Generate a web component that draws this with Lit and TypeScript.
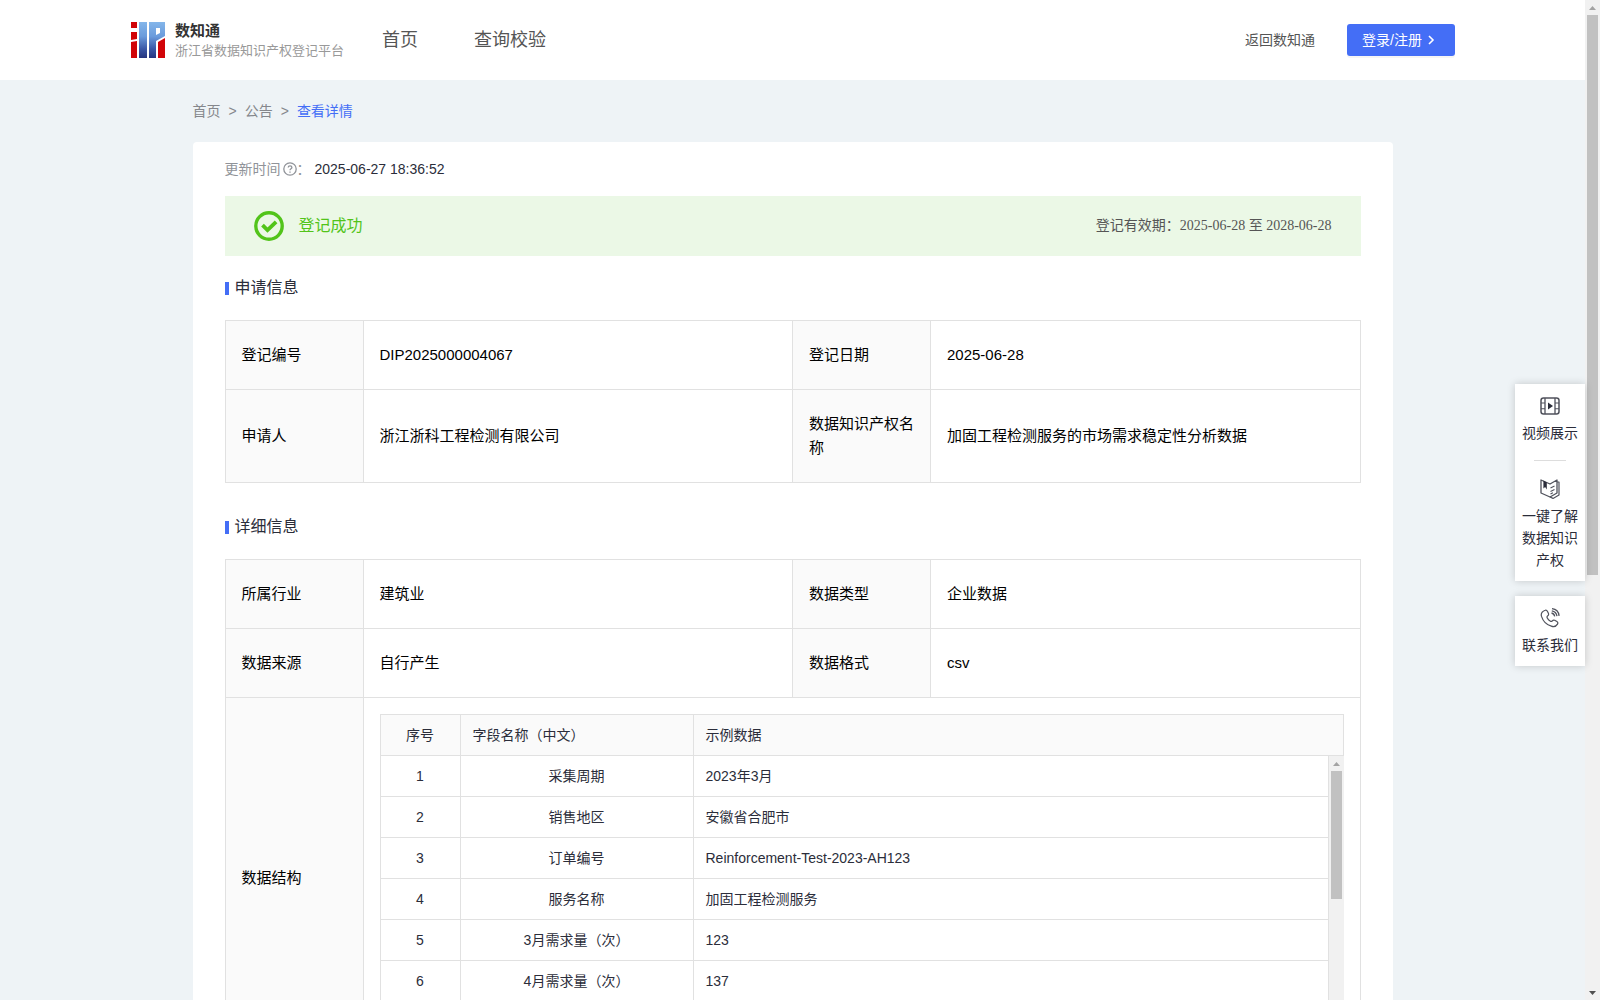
import { LitElement, html, css, svg } from "lit";
import { customElement, property } from "lit/decorators.js";

const fields = [
  ["采集周期", "2023年3月"],
  ["销售地区", "安徽省合肥市"],
  ["订单编号", "Reinforcement-Test-2023-AH123"],
  ["服务名称", "加固工程检测服务"],
  ["3月需求量（次）", "123"],
  ["4月需求量（次）", "137"],
];

const logo = html`<svg class="mark" viewBox="0 0 34 36" aria-hidden="true">
  <defs>
    <linearGradient id="blue" x1="0" y1="0" x2="0" y2="1">
      <stop offset="0" stop-color="#84b6ea" />
      <stop offset="0.4" stop-color="#6a9bdc" />
      <stop offset="0.75" stop-color="#3a57a6" />
      <stop offset="1" stop-color="#26357f" />
    </linearGradient>
  </defs>
  <path fill="#d10408" d="M0 0h6v6H0zM0 10h6v7l-6 1zM0 20l6-1v17H0zM27 20l7-4v20h-7z" />
  <path fill="url(#blue)" d="M8 0h8v36H8zM18 0h16v14l-9 5v17h-7zM25 6v7l4-2V6z" fill-rule="evenodd" />
</svg>`;

const checkIcon = html`<svg class="check" viewBox="0 0 30 30" fill="none" stroke="#52c41a" aria-hidden="true">
  <circle cx="15" cy="15" r="13.2" stroke-width="3.4" />
  <path d="M8.5 14.2l5 5 8.6-8.4" stroke-width="3.8" />
</svg>`;

const videoIcon = svg`
  <rect x="1" y="2" width="18" height="16" rx="2.5" stroke-width="1.5" />
  <path d="M5 2v16M15 2v16" stroke-width="1.3" />
  <path d="M1 7h4M1 12.8h4M15 7h4M15 12.8h4" stroke-width="1.1" />
  <path d="M8 6.5l5 3.5-5 3.500z" fill="#2b2d3a" stroke="none" />`;

const bookIcon = svg`
  <path d="M1 1l9 4 7-4v13l-7 4-9-4z" stroke-width="1.3" />
  <path d="M3.4 1.6v8l1.7-1.6 1.7 2.6V3.4z" fill="#2b2d3a" stroke="none" />
  <path d="M17 3h2v13l-6 3.4-3-1.400" stroke-width="1.2" />
  <path d="M10.5 9l4-2M10.5 12.4l4-2M10.5 15l2.4-1.2" stroke-width="1.1" />`;

const phoneIcon = svg`
  <path d="M5.2 2.2c1-.4 1.8.2 2.3 1.2l1 2.2c.4 1-.1 1.7-1 2.4-.8.6-.6 1.4 0 2.4.7 1 1.6 2 2.6 2.6.9.6 1.6.6 2.2-.2.7-.8 1.500-1 2.4-.5l2.2 1.3c1 .6 1.2 1.500.6 2.500-1.300 2.100-3.600 3-6.200 2C7 17 3 13 1.500 8.400.7 5.600 2.500 3.200 5.200 2.200z" stroke-width="1.2" />
  <path d="M11.5 5c1.7.3 2.9 1.6 3.2 3.4M11.8 2.8c2.7.4 4.700 2.500 5.200 5.400M12 .7c3.9.4 6.700 3.400 7.100 7.200" stroke-width="1.3" />`;

@customElement("scroll-rail")
export class ScrollRail extends LitElement {
  @property({ type: Boolean, reflect: true }) page = false;

  static styles = css`
    :host {
      display: flex;
      flex-direction: column;
      flex: none;
      width: 15px;
      background: #f1f1f1;
    }
    .end {
      flex: none;
      width: 15px;
      height: 15px;
    }
    .track {
      flex: 1;
      padding: 0 2px;
    }
    .thumb {
      height: 50%;
      background: #c1c1c1;
    }
    :host([page]) .thumb {
      height: 57.7%;
    }
  `;

  render() {
    return html`
      <svg class="end" viewBox="0 0 15 15" aria-hidden="true"><path d="M4 10h7L7.5 6z" fill="#a3a3a3" /></svg>
      <div class="track"><div class="thumb"></div></div>
      <svg class="end" viewBox="0 0 15 15" aria-hidden="true"><path d="M4 6h7l-3.5 4z" fill="#505050" /></svg>
    `;
  }
}

@customElement("app-root")
export class AppRoot extends LitElement {
  static styles = css`
    :host {
      display: flex;
      height: 100vh;
      overflow: hidden;
      position: relative;
      background: #eef3f6;
      color: #2b2d3a;
      font: 14px/22px "Liberation Sans", "Noto Sans CJK SC", sans-serif;
    }
    * {
      box-sizing: border-box;
    }
    a {
      color: inherit;
      text-decoration: none;
    }
    .view {
      flex: 1;
      min-width: 0;
      overflow-y: auto;
      scrollbar-width: none;
    }
    .top {
      display: flex;
      align-items: center;
      height: 80px;
      padding: 0 130px;
      background: #fff;
      color: #555;
    }
    .brand {
      display: flex;
      align-items: center;
      gap: 10px;
      width: 252px;
      padding-left: 1px;
    }
    .mark {
      flex: none;
      width: 34px;
      height: 36px;
    }
    .name {
      display: block;
      font: 700 15px/20px "Noto Sans CJK SC", sans-serif;
      color: #333;
    }
    .sub {
      display: block;
      font: 13px/20px "Noto Sans CJK SC", sans-serif;
      color: #999;
      white-space: nowrap;
    }
    .menu {
      display: flex;
      flex: 1;
      gap: 56px;
      font-size: 18px;
    }
    .login {
      display: flex;
      align-items: center;
      gap: 4px;
      width: 108px;
      height: 32px;
      margin-left: 32px;
      padding: 0 15px;
      border: 0;
      border-radius: 3px;
      background: #446ef6;
      box-shadow: 0 2px 0 rgba(0, 0, 0, 0.04);
      color: #fff;
      font: inherit;
      white-space: nowrap;
    }
    .chev {
      flex: none;
      width: 10px;
      height: 10px;
    }
    .page {
      max-width: 1200px;
      margin: 0 auto;
    }
    .crumbs {
      display: flex;
      gap: 8px;
      padding: 20px 0;
      color: #85878c;
    }
    .current {
      color: #446ef6;
    }
    .card {
      padding: 16px 32px 32px;
      border-radius: 4px;
      background: #fff;
    }
    .updated {
      display: flex;
      align-items: center;
      margin: 0;
      color: #909399;
    }
    .help {
      width: 14px;
      height: 14px;
      margin-left: 2px;
    }
    .updated time {
      margin-left: 4px;
      color: #2b2d3a;
    }
    .banner {
      display: flex;
      align-items: center;
      gap: 15px;
      height: 60px;
      margin-top: 16px;
      padding: 0 29px;
      background: #ebf8e6;
    }
    .check {
      width: 30px;
      height: 30px;
    }
    .state {
      flex: 1;
      font-size: 16px;
      color: #52c41a;
    }
    .valid {
      font-family: "Liberation Serif", "Noto Sans CJK SC", serif;
      color: #555;
    }
    .section {
      display: flex;
      align-items: center;
      gap: 6px;
      height: 24px;
      margin: 20px 0;
      font-size: 16px;
      font-weight: 400;
    }
    .grid + .section {
      margin-top: 32px;
    }
    .section::before {
      content: "";
      width: 4px;
      height: 13px;
      background: #446ef6;
    }
    table {
      width: 100%;
      border-collapse: separate;
      border-spacing: 0;
      table-layout: fixed;
    }
    th,
    td {
      border: 0 solid #e1e1e1;
      border-width: 0 1px 1px 0;
      font-weight: 400;
      text-align: left;
    }
    th {
      background: #fafafa;
    }
    .grid {
      border: 1px solid #e1e1e1;
      border-width: 1px 0 0 1px;
      color: #000;
      font-size: 15px;
      line-height: 24px;
    }
    .key {
      width: 138px;
    }
    .grid th,
    .grid td {
      padding: 22px 16px;
    }
    .grid td.nest {
      padding: 16px;
    }
    .inner {
      border-left: 1px solid #e1e1e1;
      color: #2b2d3a;
      font-size: 14px;
      line-height: 24px;
    }
    .head {
      border-top: 1px solid #e1e1e1;
    }
    .scroller {
      display: flex;
      height: 286px;
      overflow: hidden;
    }
    .rows {
      flex: 1;
    }
    .no {
      width: 80px;
    }
    .field {
      width: 233px;
    }
    .grid .inner th,
    .grid .inner td {
      padding: 8px 12px;
    }
    .inner .mid {
      text-align: center;
    }
    .dock {
      position: absolute;
      top: 384px;
      right: 15px;
      display: flex;
      flex-direction: column;
      gap: 15px;
      width: 70px;
    }
    .tile {
      display: flex;
      flex-direction: column;
      align-items: center;
      padding: 12px 6px 10px;
      background: #fff;
      box-shadow: 0 0 8px rgba(0, 0, 0, 0.18);
      text-align: center;
    }
    .link {
      display: flex;
      flex-direction: column;
      align-items: center;
      gap: 6px;
      width: 58px;
    }
    .glyph {
      width: 20px;
      height: 20px;
    }
    .tile hr {
      width: 32px;
      margin: 16px 0 18px;
      border: 0;
      border-top: 1px solid #ddd;
    }
  `;

  private pair(a: string, b: string, c: string, d: string) {
    return html`<tr>
      <th scope="row">${a}</th>
      <td>${b}</td>
      <th scope="row">${c}</th>
      <td>${d}</td>
    </tr>`;
  }

  private cols() {
    return html`<colgroup><col class="key" /><col /><col class="key" /><col /></colgroup>`;
  }

  private innerCols() {
    return html`<colgroup><col class="no" /><col class="field" /><col /></colgroup>`;
  }

  private dockLink(icon: unknown, label: string) {
    return html`<a class="link" href="#">
      <svg class="glyph" viewBox="0 0 20 20" fill="none" stroke="#50525c" stroke-linejoin="round" aria-hidden="true">${icon}</svg>
      <span>${label}</span>
    </a>`;
  }

  render() {
    return html`
      <div class="view">
        <header class="top">
          <a class="brand" href="#">
            ${logo}
            <span><span class="name">数知通</span><span class="sub">浙江省数据知识产权登记平台</span></span>
          </a>
          <nav class="menu"><a href="#">首页</a><a href="#">查询校验</a></nav>
          <a href="#">返回数知通</a>
          <button class="login" type="button">
            登录/注册
            <svg class="chev" viewBox="0 0 10 10" fill="none" stroke="#fff" stroke-width="1.6" aria-hidden="true"><path d="M3 1l4 4-4 4" /></svg>
          </button>
        </header>
        <main class="page">
          <nav class="crumbs">
            <a href="#">首页</a><span>&gt;</span><a href="#">公告</a><span>&gt;</span><a class="current" href="#">查看详情</a>
          </nav>
          <article class="card">
            <p class="updated">
              更新时间
              <svg class="help" viewBox="0 0 14 14" fill="none" stroke="#909399" stroke-width="1.3" aria-hidden="true">
                <circle cx="7" cy="7" r="6.2" />
                <path d="M5.2 5.6c0-2.400 3.700-2.300 3.700-.1 0 1.300-1.900 1.300-1.900 2.800M7 9.400v1.300" />
              </svg>
              ：<time>2025-06-27 18:36:52</time>
            </p>
            <div class="banner">
              ${checkIcon}
              <span class="state">登记成功</span>
              <span class="valid">登记有效期：2025-06-28 至 2028-06-28</span>
            </div>
            <h2 class="section">申请信息</h2>
            <table class="grid">
              ${this.cols()}
              <tbody>
                ${this.pair("登记编号", "DIP2025000004067", "登记日期", "2025-06-28")}
                ${this.pair("申请人", "浙江浙科工程检测有限公司", "数据知识产权名称", "加固工程检测服务的市场需求稳定性分析数据")}
              </tbody>
            </table>
            <h2 class="section">详细信息</h2>
            <table class="grid">
              ${this.cols()}
              <tbody>
                ${this.pair("所属行业", "建筑业", "数据类型", "企业数据")}
                ${this.pair("数据来源", "自行产生", "数据格式", "csv")}
                <tr>
                  <th scope="row">数据结构</th>
                  <td class="nest" colspan="3">
                    <div class="inner">
                      <table class="head">
                        ${this.innerCols()}
                        <thead>
                          <tr><th class="mid" scope="col">序号</th><th scope="col">字段名称（中文）</th><th scope="col">示例数据</th></tr>
                        </thead>
                      </table>
                      <div class="scroller">
                        <div class="rows">
                          <table>
                            ${this.innerCols()}
                            <tbody>
                              ${fields.map(
                                ([name, sample], i) => html`<tr><td class="mid">${i + 1}</td><td class="mid">${name}</td><td>${sample}</td></tr>`,
                              )}
                            </tbody>
                          </table>
                        </div>
                        <scroll-rail></scroll-rail>
                      </div>
                    </div>
                  </td>
                </tr>
              </tbody>
            </table>
          </article>
        </main>
      </div>
      <scroll-rail page></scroll-rail>
      <aside class="dock">
        <div class="tile">
          ${this.dockLink(videoIcon, "视频展示")}
          <hr />
          ${this.dockLink(bookIcon, "一键了解数据知识产权")}
        </div>
        <div class="tile">${this.dockLink(phoneIcon, "联系我们")}</div>
      </aside>
    `;
  }
}
